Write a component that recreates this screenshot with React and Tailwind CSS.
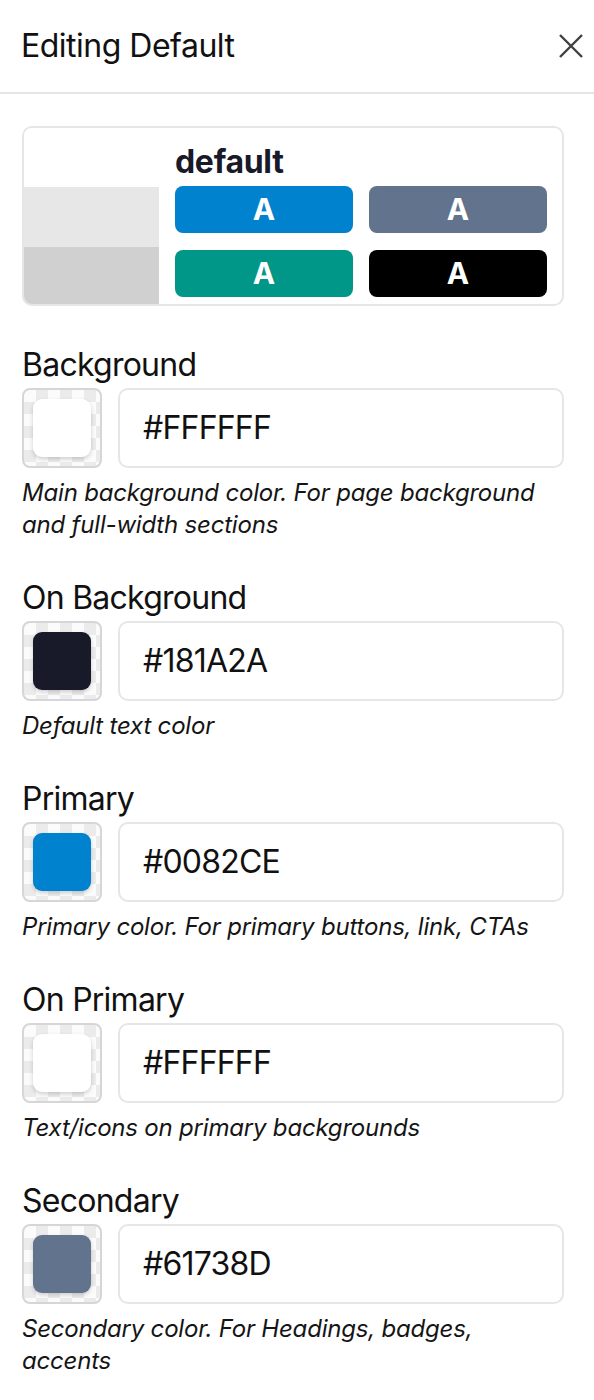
import React from "react";

const rows = [
  { label: "Background", hex: "#FFFFFF", color: "bg-[#FFFFFF]", desc: "Main background color. For page background and full-width sections" },
  { label: "On Background", hex: "#181A2A", color: "bg-[#181A2A]", desc: "Default text color" },
  { label: "Primary", hex: "#0082CE", color: "bg-[#0082CE]", desc: "Primary color. For primary buttons, link, CTAs" },
  { label: "On Primary", hex: "#FFFFFF", color: "bg-[#FFFFFF]", desc: "Text/icons on primary backgrounds" },
  { label: "Secondary", hex: "#61738D", color: "bg-[#61738D]", desc: "Secondary color. For Headings, badges, accents" },
];

function Swatch({ color }) {
  return (
    <div className="w-[80px] h-[80px] shrink-0 rounded-[8px] border-2 border-[#d6d6d8] p-[9px] bg-[conic-gradient(#ebebeb_25%,#fbfbfb_0_50%,#ebebeb_0_75%,#fbfbfb_0)] bg-[length:24px_24px]">
      <div className={`w-full h-full rounded-[9px] shadow-[0_2px_4px_rgba(0,0,0,0.18)] ${color}`} />
    </div>
  );
}

function Row({ label, hex, color, desc }) {
  return (
    <div className="flex flex-col">
      <div className="text-[32px] leading-[40px] tracking-[-0.75px] text-[#111] mb-[3px]">{label}</div>
      <div className="flex gap-4">
        <Swatch color={color} />
        <div className="flex-1 h-[80px] rounded-[10px] border-2 border-[#e6e6e9] flex items-center pl-[23px] text-[32px] tracking-[-0.8px] text-[#111]">
          {hex}
        </div>
      </div>
      <div className="mt-[9px] text-[24px] leading-[32px] tracking-[-0.2px] italic text-[#151515]">{desc}</div>
    </div>
  );
}

function Btn({ bg }) {
  return (
    <div className={`h-[47px] rounded-[8px] flex items-center justify-center text-white font-bold text-[30px] ${bg}`}>A</div>
  );
}

export default function App() {
  return (
    <div className="w-[594px] min-h-[1400px] bg-white font-['Inter',sans-serif]">
      <div className="h-[94px] border-b-2 border-[#e5e5e5] flex items-center justify-between pl-[21px] pr-[11px]">
        <div className="text-[32px] tracking-[-0.5px] text-[#111]">Editing Default</div>
        <svg width="24" height="24" viewBox="0 0 24 24" className="text-[#404040]">
          <path d="M1 1 L23 23 M23 1 L1 23" stroke="currentColor" strokeWidth="2.4" fill="none" />
        </svg>
      </div>
      <div className="pl-[22px] pr-[30px] pt-[32px] flex flex-col">
        <div className="h-[180px] rounded-[10px] border-2 border-[#e6e6e9] overflow-hidden flex">
          <div className="w-[135px] flex flex-col shrink-0">
            <div className="h-[59px] bg-white" />
            <div className="h-[60px] bg-[#e7e7e7]" />
            <div className="flex-1 bg-[#d0d0d0]" />
          </div>
          <div className="flex-1 pl-[16px] pr-[15px] pt-[14px] flex flex-col">
            <div className="text-[32px] leading-[40px] font-bold tracking-[-0.3px] text-[#181A2A] mb-[4px]">default</div>
            <div className="grid grid-cols-2 gap-x-4 gap-y-[17px]">
              <Btn bg="bg-[#0082CE]" />
              <Btn bg="bg-[#61738D]" />
              <Btn bg="bg-[#009688]" />
              <Btn bg="bg-black" />
            </div>
          </div>
        </div>
        <div className="mt-[39px] flex flex-col gap-[37px]">
          {rows.map((r) => (
            <Row key={r.label} {...r} />
          ))}
        </div>
      </div>
    </div>
  );
}
